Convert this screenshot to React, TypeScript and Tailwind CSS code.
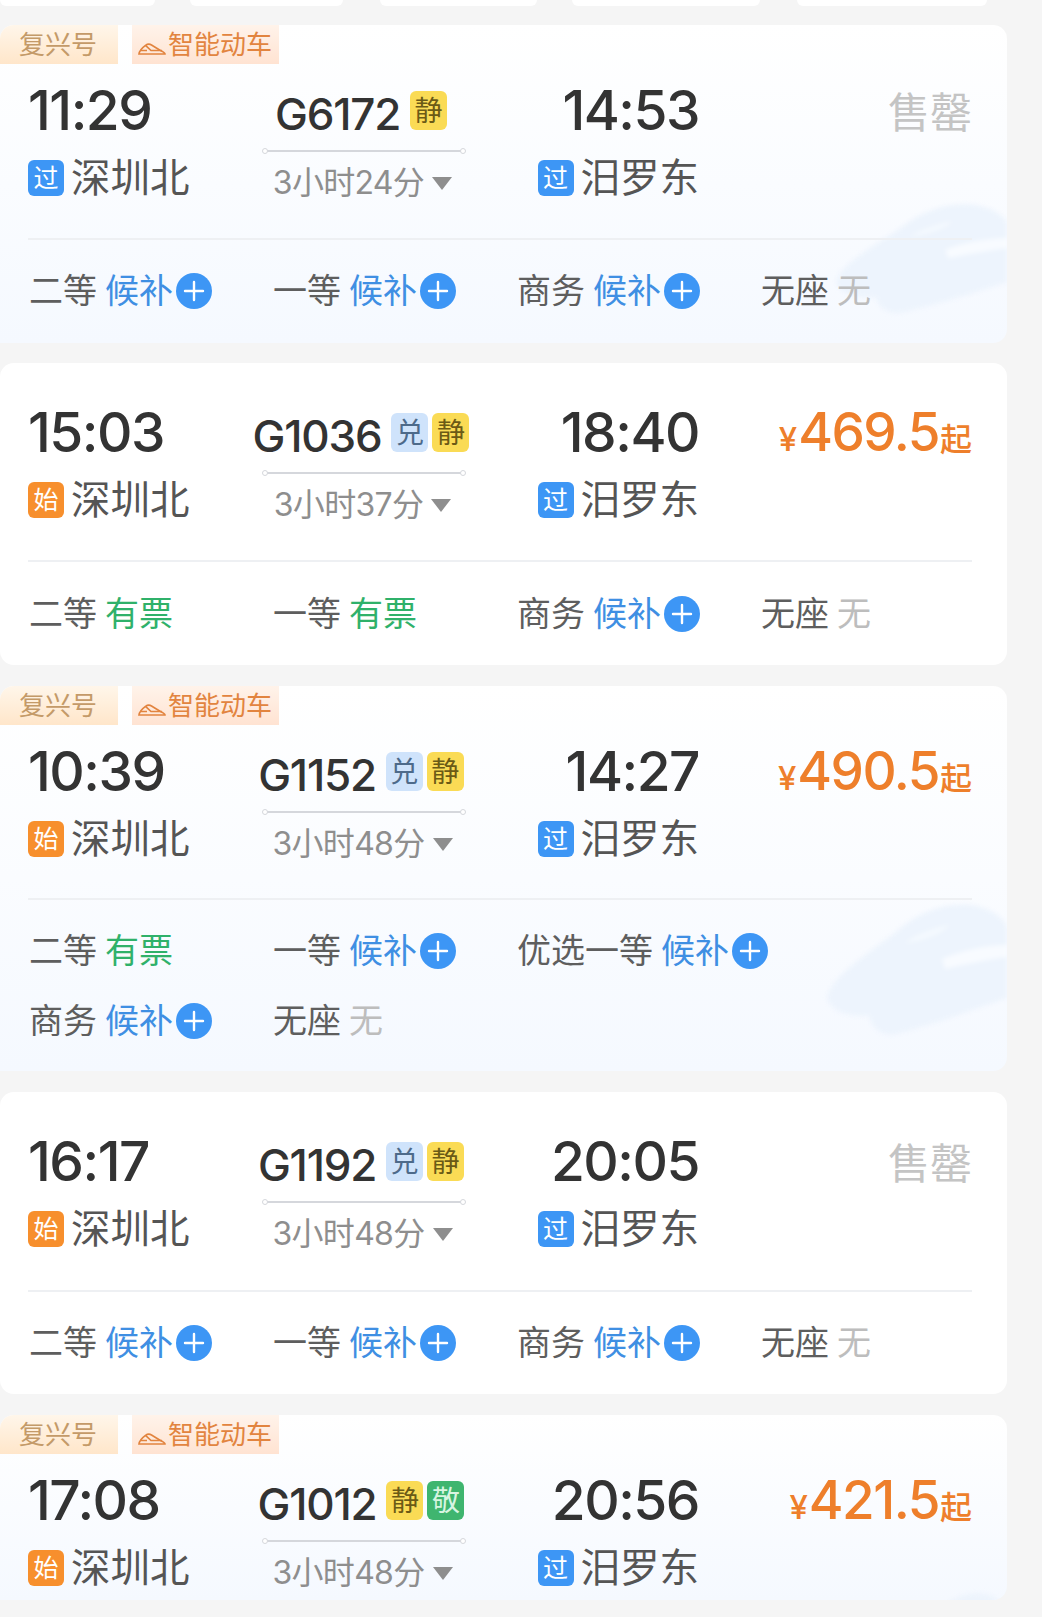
const FONT = "font-['Inter','Noto_Sans_CJK_SC',sans-serif]";

type Seat = { name: string; status: "wait" | "has" | "none"; span?: boolean };

type Train = {
  tags?: boolean;
  dep: string;
  depKind: "过" | "始";
  no: string;
  badges: ("兑" | "静" | "敬")[];
  dur: string;
  arr: string;
  price?: string;
  seats: Seat[];
  wave?: "short" | "tall" | "cut";
  gapClass: string;
  seatPad: string;
  dividerGap: string;
};

const STD = (a: Seat["status"], b: Seat["status"], c: Seat["status"]): Seat[] => [
  { name: "二等", status: a },
  { name: "一等", status: b },
  { name: "商务", status: c },
  { name: "无座", status: "none" },
];

const trains: Train[] = [
  { tags: true, dep: "11:29", depKind: "过", no: "G6172", badges: ["静"], dur: "3小时24分", arr: "14:53", seats: STD("wait", "wait", "wait"), wave: "short", gapClass: "mb-[20px]", seatPad: "pt-[16px] pb-[17px]", dividerGap: "mt-[28px]" },
  { dep: "15:03", depKind: "始", no: "G1036", badges: ["兑", "静"], dur: "3小时37分", arr: "18:40", price: "469.5", seats: STD("has", "has", "wait"), gapClass: "mb-[21px]", seatPad: "pt-[17px] pb-[16px]", dividerGap: "mt-[28px]" },
  {
    tags: true, dep: "10:39", depKind: "始", no: "G1152", badges: ["兑", "静"], dur: "3小时48分", arr: "14:27", price: "490.5",
    seats: [
      { name: "二等", status: "has" },
      { name: "一等", status: "wait" },
      { name: "优选一等", status: "wait", span: true },
      { name: "商务", status: "wait" },
      { name: "无座", status: "none" },
    ],
    wave: "tall", gapClass: "mb-[21px]", seatPad: "pt-[16px] pb-[15px]", dividerGap: "mt-[27px]",
  },
  { dep: "16:17", depKind: "始", no: "G1192", badges: ["兑", "静"], dur: "3小时48分", arr: "20:05", seats: STD("wait", "wait", "wait"), gapClass: "mb-[21px]", seatPad: "pt-[16px] pb-[16px]", dividerGap: "mt-[29px]" },
  { tags: true, dep: "17:08", depKind: "始", no: "G1012", badges: ["静", "敬"], dur: "3小时48分", arr: "20:56", price: "421.5", seats: [], wave: "cut", gapClass: "", seatPad: "", dividerGap: "" },
];

const topTabs = [
  "w-[155px]",
  "ml-[35px] w-[153px]",
  "ml-[37px] w-[157px]",
  "ml-[35px] w-[188px]",
  "ml-[37px] w-[190px]",
];

function TrainIcon() {
  return (
    <svg width="28" height="13" viewBox="0 0 28 13" fill="none" stroke="#e2843f" strokeWidth="1.7" className="mr-[2px] mt-[7px] shrink-0">
      <path d="M1 12h26c.2-1.2-2-2.4-5-3.8L13.5 3C11.5 1.8 9.5 2 7.5 3.4 4 6 1.3 9 1 12z" />
      <path d="M7.5 3.4L13 8.5h11" />
      <path d="M2 8.5h7" />
    </svg>
  );
}

function Tags() {
  return (
    <div className="flex h-[39px] items-stretch gap-[14px]">
      <div className="flex w-[118px] items-center pl-[19px] text-[26px] leading-none text-[#c49a68] bg-gradient-to-b from-[#fff6ea] to-[#ffe6ca]">复兴号</div>
      <div className="flex w-[147px] items-center pl-[6px] text-[26px] leading-none text-[#e2843f] bg-gradient-to-b from-[#fff3ea] to-[#ffe3d2]">
        <TrainIcon />
        智能动车
      </div>
    </div>
  );
}

function Kind({ k }: { k: string }) {
  return (
    <span className={`flex h-[36px] w-[36px] shrink-0 items-center justify-center rounded-[6px] text-[25px] leading-none text-white ${k === "过" ? "bg-[#3d96f5]" : "bg-[#f78f2d]"}`}>{k}</span>
  );
}

function Badge({ b }: { b: string }) {
  const cls = b === "兑" ? "bg-[#cfe3fb] text-[#4d6a8a]" : b === "静" ? "bg-[#fadb55] text-[#6b5a16]" : "bg-[#3fb56f] text-[#d8f5e2]";
  return <span className={`flex h-[39px] w-[37px] shrink-0 items-center justify-center rounded-[6px] text-[28px] leading-none ${cls}`}>{b}</span>;
}

function Plus() {
  return (
    <svg width="36" height="36" viewBox="0 0 36 36" className="ml-[3px] shrink-0">
      <circle cx="18" cy="18" r="18" fill="#3d96f5" />
      <path d="M9 18h18M18 9v18" stroke="#fff" strokeWidth="2.4" strokeLinecap="round" />
    </svg>
  );
}

function SeatCell({ s }: { s: Seat }) {
  return (
    <div className={`ml-[1px] flex h-[70px] items-center whitespace-nowrap text-[34px] leading-none text-[#5e5e5e] ${s.span ? "col-span-2" : ""}`}>
      <span>{s.name}</span>
      {s.status === "wait" && (
        <>
          <span className="ml-[8px] text-[#3f8fe3]">候补</span>
          <Plus />
        </>
      )}
      {s.status === "has" && <span className="ml-[8px] text-[#2fb16a]">有票</span>}
      {s.status === "none" && <span className="ml-[8px] text-[#bdbdbd]">无</span>}
    </div>
  );
}

function Wave({ className }: { className: string }) {
  return (
    <svg viewBox="0 0 180 134" preserveAspectRatio="none" className={`pointer-events-none absolute blur-[2px] ${className}`} fill="none">
      <path d="M0 95C5 72 40 52 70 28 95 6 125-2 150 3c15 4 28 12 30 22v70c-35 12-65 24-110 36-15 3-25-5-28-18-14 0-36 0-42-18z" fill="#edf4fd" />
      <path d="M115 56c18-8 45-14 65-14v12c-22 3-45 8-62 12z" fill="#f8fbff" />
      <path d="M78 40c10-8 30-16 45-18-8 8-25 16-45 18z" fill="#f4f9fe" />
    </svg>
  );
}

const waveClass = {
  short: "right-0 bottom-[28px] h-[112px] w-[171px]",
  tall: "right-0 bottom-[34px] h-[134px] w-[180px]",
  cut: "right-0 top-[177px] h-[112px] w-[120px]",
};

function Card({ t }: { t: Train }) {
  return (
    <div className={`relative w-[1007px] overflow-hidden rounded-tr-[14px] rounded-br-[14px] rounded-tl-[14px] ${t.tags ? "bg-gradient-to-b from-white to-[#f5f9ff]" : "rounded-bl-[14px] bg-white"} ${t.gapClass}`}>
      {t.wave && <Wave className={waveClass[t.wave]} />}
      <div className="relative">
        {t.tags ? <Tags /> : <div className="h-[23px]" />}
        <div className="pl-[28px] pr-[35px]">
          <div className="flex h-[146px] items-start">
            <div className="w-[235px]">
              <div className="h-[96px] pt-[11px] text-[55px] font-medium leading-[70px] tracking-[-1.5px] text-[#333]">{t.dep}</div>
              <div className="flex items-center text-[39.5px] leading-[36px] text-[#555]">
                <Kind k={t.depKind} />
                <span className="ml-[7px]">深圳北</span>
              </div>
            </div>
            <div className="w-[202px]">
              <div className="flex h-[86px] items-end justify-center gap-[4px] pb-[20px] pr-[6px]">
                <span className="-mb-[7px] mr-[6px] shrink-0 whitespace-nowrap text-[44px] font-medium leading-[46px] tracking-[-1.2px] text-[#333]">{t.no}</span>
                {t.badges.map((b) => (
                  <Badge key={b} b={b} />
                ))}
              </div>
              <div className="relative h-[2px] bg-[#d5d7dc]">
                <span className="absolute -left-[1px] -top-[2px] h-[6px] w-[6px] rounded-full border border-[#d5d7dc] bg-white" />
                <span className="absolute -right-[1px] -top-[2px] h-[6px] w-[6px] rounded-full border border-[#d5d7dc] bg-white" />
              </div>
              <div className="mt-[11px] flex items-center justify-center pr-[3px] text-[32px] leading-[40px] text-[#8e8e8e]">
                <span className="whitespace-nowrap tracking-[-0.7px]">{t.dur}</span>
                <svg width="20" height="13" viewBox="0 0 20 13" className="ml-[8px] shrink-0">
                  <path d="M0 0h20L10 13z" fill="#8e8e8e" />
                </svg>
              </div>
            </div>
            <div className="flex w-[234px] flex-col items-end">
              <div className="h-[96px] pt-[11px] text-[55px] font-medium leading-[70px] tracking-[-1.5px] text-[#333]">{t.arr}</div>
              <div className="flex items-center text-[39.5px] leading-[36px] text-[#555]">
                <Kind k="过" />
                <span className="ml-[7px]">汨罗东</span>
              </div>
            </div>
            <div className="flex flex-1 justify-end">
              {t.price ? (
                <div className="flex items-baseline pt-[11px] leading-[70px] text-[#ee7f2b]">
                  <span className="mr-[1px] text-[33px] font-medium">¥</span>
                  <span className="text-[53px] font-medium tracking-[-1.5px]">{t.price}</span>
                  <span className="ml-[1px] text-[32px] font-medium">起</span>
                </div>
              ) : (
                <span className="pt-[16px] text-[42px] leading-[66px] text-[#c4c4c4]">售罄</span>
              )}
            </div>
          </div>
          {t.seats.length > 0 && (
            <>
              <div className={`${t.dividerGap} h-[2px] bg-[#eef0f3]`} />
              <div className={`grid grid-cols-[244px_244px_244px_1fr] ${t.seatPad}`}>
                {t.seats.map((s) => (
                  <SeatCell key={s.name} s={s} />
                ))}
              </div>
            </>
          )}
        </div>
      </div>
    </div>
  );
}

export default function App() {
  return (
    <div className={`h-[1617px] w-[1042px] overflow-hidden bg-[#f5f5f5] ${FONT}`}>
      <div className="flex h-[25px] items-start">
        {topTabs.map((c) => (
          <div key={c} className={`h-[6px] rounded-b-[6px] bg-white ${c}`} />
        ))}
      </div>
      {trains.map((t) => (
        <Card key={t.no} t={t} />
      ))}
    </div>
  );
}
